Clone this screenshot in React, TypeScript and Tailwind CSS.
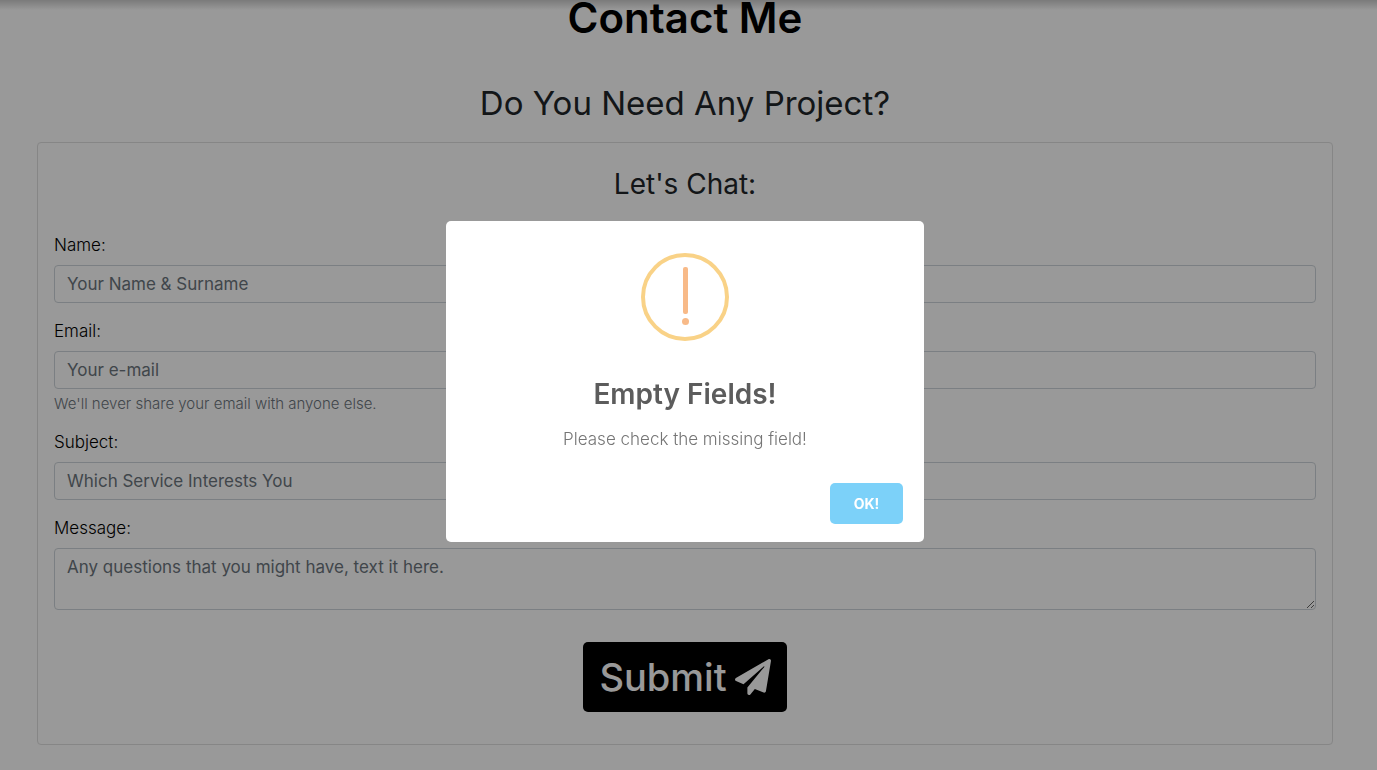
import type { ReactNode } from 'react';

const control =
  'block w-full rounded border border-[#ced4da] bg-white px-3 text-[17px] leading-6 text-[#495057] placeholder:text-[#6c757d] placeholder:opacity-100';

function Field({ id, label, children }: { id: string; label: string; children: ReactNode }) {
  return (
    <div className="mb-4">
      <label htmlFor={id} className="mb-2 block text-[17px] leading-6 font-light text-black">
        {label}
      </label>
      {children}
    </div>
  );
}

function PaperPlane() {
  return (
    <svg viewBox="0 0 512 512" fill="currentColor" aria-hidden="true" className="size-9 shrink-0">
      <path d="M476 3.2L12.500 270.600c-18.100 10.400-15.800 35.600 2.200 43.200L121 358.400l287.300-253.200c5.500-4.900 13.300 2.600 8.600 8.300L176 407v80.500c0 23.600 28.500 32.900 42.500 15.800L282 426l124.600 52.200c14.200 6 30.400-2.900 33-18.200l72-432C515 7.800 493.300-6.800 476 3.200z" />
    </svg>
  );
}

function EmptyFieldsDialog() {
  return (
    <div className="fixed inset-0 flex items-center justify-center bg-black/40 pr-[7px] pb-[7px]">
      <div
        role="alertdialog"
        aria-modal="true"
        aria-labelledby="alert-title"
        aria-describedby="alert-text"
        className="flex w-[478px] max-w-[90%] flex-col items-center rounded-[5px] bg-white pt-8 text-center"
      >
        <svg viewBox="0 0 88 88" aria-hidden="true" className="size-[88px]">
          <circle cx="44" cy="44" r="42" fill="none" stroke="#f9d287" strokeWidth="4" />
          <rect x="42" y="14" width="5" height="47" rx="2" fill="#f8ba88" />
          <circle cx="44.500" cy="68.500" r="3.500" fill="#f8ba88" />
        </svg>
        <h2 id="alert-title" className="mt-8 text-[28px] leading-[42px] font-semibold text-[#5c5c5c]">
          Empty Fields!
        </h2>
        <p id="alert-text" className="mt-3 text-[17px] leading-6 font-light text-[#757575]">
          Please check the missing field!
        </p>
        <div className="mt-8 flex w-full justify-end px-[21px] pb-[18px]">
          <button
            type="button"
            className="h-[41px] w-[73px] rounded-[5px] bg-[#7cd1f9] text-sm font-bold text-white"
          >
            OK!
          </button>
        </div>
      </div>
    </div>
  );
}

export default function App() {
  return (
    <div className="relative min-h-screen bg-white pr-[7px] font-['Inter',sans-serif]">
      <div className="absolute inset-x-0 top-0 h-2.5 bg-gradient-to-b from-black/20 to-transparent" />
      <main className="px-[37px]">
        <h1 className="pb-12 text-center text-[42px] leading-9 font-semibold text-black">Contact Me</h1>
        <h2 className="pb-5 text-center text-[33px] leading-[38px] font-normal text-[#212529]">
          Do You Need Any Project?
        </h2>
        <form
          noValidate
          onSubmit={(event) => event.preventDefault()}
          className="rounded border border-[#dfdfdf] px-4 pt-6 pb-8"
        >
          <h3 className="mb-8 text-center text-[28px] leading-[34px] font-normal text-[#212529]">
            Let's Chat:
          </h3>
          <Field id="name" label="Name:">
            <input id="name" type="text" placeholder="Your Name & Surname" className={`${control} h-[38px]`} />
          </Field>
          <Field id="email" label="Email:">
            <input id="email" type="email" placeholder="Your e-mail" className={`${control} h-[38px]`} />
            <small className="mt-1 block text-[15px] leading-[21px] font-light text-[#6c757d]">
              We'll never share your email with anyone else.
            </small>
          </Field>
          <Field id="subject" label="Subject:">
            <input
              id="subject"
              type="text"
              placeholder="Which Service Interests You"
              className={`${control} h-[38px]`}
            />
          </Field>
          <Field id="message" label="Message:">
            <textarea
              id="message"
              rows={2}
              placeholder="Any questions that you might have, text it here."
              className={`${control} h-[62px] resize py-1.5`}
            />
          </Field>
          <div className="flex justify-center pt-4">
            <button
              type="submit"
              className="flex h-[70px] items-center gap-2 rounded-[5px] bg-black px-4 text-[38px] font-medium text-white"
            >
              Submit
              <PaperPlane />
            </button>
          </div>
        </form>
      </main>
      <EmptyFieldsDialog />
    </div>
  );
}
